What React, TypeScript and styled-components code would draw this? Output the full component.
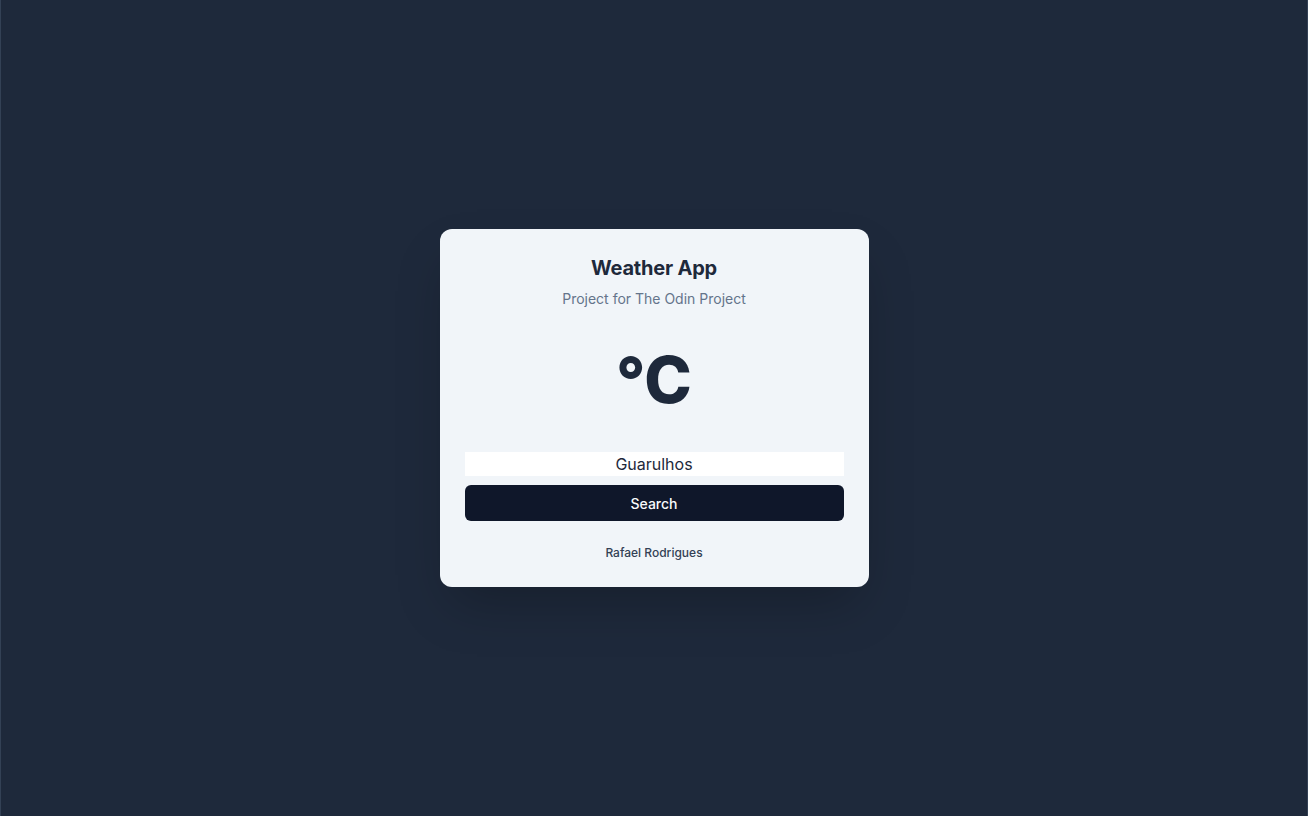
import React from "react";
import styled, { createGlobalStyle } from "styled-components";

const Global = createGlobalStyle`
  * { box-sizing: border-box; }
  html, body { margin: 0; padding: 0; }
  body {
    background: #1e293b;
    font-family: Inter, "Noto Sans", "Liberation Sans", sans-serif;
  }
`;

const Page = styled.main`
  min-height: 100vh;
  display: flex;
  align-items: center;
  justify-content: center;
  background: #1e293b;
  border-left: 1px solid #334155;
  border-right: 1px solid #334155;
`;

const Card = styled.section`
  width: 429px;
  background: #f1f5f9;
  border-radius: 12px;
  padding: 25px 25px 26px;
  display: flex;
  flex-direction: column;
  align-items: stretch;
  box-shadow: 0 25px 50px -12px rgba(0, 0, 0, 0.25);
`;

const Title = styled.h1`
  margin: 0;
  font-size: 20px;
  line-height: 28px;
  font-weight: 700;
  letter-spacing: -0.2px;
  color: #1e293b;
  text-align: center;
`;

const Subtitle = styled.p`
  margin: 7px 0 0;
  font-size: 14px;
  line-height: 20px;
  color: #64748b;
  text-align: center;
`;

const Temperature = styled.div`
  margin-top: 39px;
  font-size: 64px;
  line-height: 64px;
  font-weight: 800;
  color: #1e293b;
  text-align: center;
`;

const CityInput = styled.input`
  margin-top: 40px;
  height: 24px;
  width: 100%;
  border: none;
  outline: none;
  background: #ffffff;
  font-family: inherit;
  font-size: 16px;
  color: #1e293b;
  text-align: center;
  padding: 0;
`;

const SearchButton = styled.button`
  margin-top: 9px;
  height: 36px;
  width: 100%;
  border: none;
  border-radius: 6px;
  background: #0f172a;
  color: #f8fafc;
  font-family: inherit;
  font-size: 14px;
  font-weight: 500;
  cursor: pointer;
`;

const Author = styled.footer`
  margin-top: 24px;
  font-size: 12px;
  line-height: 16px;
  font-weight: 500;
  color: #334155;
  text-align: center;
`;

export default function App() {
  return (
    <>
      <Global />
      <Page>
        <Card>
          <Title>Weather App</Title>
          <Subtitle>Project for The Odin Project</Subtitle>
          <Temperature>°C</Temperature>
          <CityInput defaultValue="Guarulhos" />
          <SearchButton>Search</SearchButton>
          <Author>Rafael Rodrigues</Author>
        </Card>
      </Page>
    </>
  );
}
